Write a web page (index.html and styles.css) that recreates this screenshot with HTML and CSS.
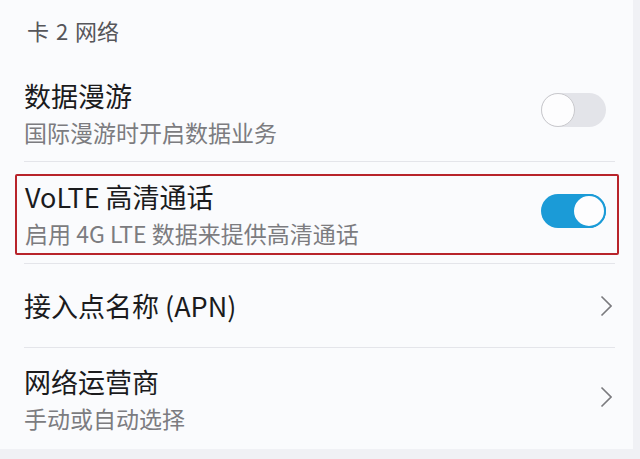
FILE: index.html
```html
<!DOCTYPE html>
<html lang="zh-CN">
<head>
	<meta charset="utf-8">
	<title>移动网络</title>
	<link rel="stylesheet" href="styles.css">
</head>
<body>
	<div class="page">
		<div class="section-title">卡 2 网络</div>
		<div class="list">
			<div class="item item-first">
				<div class="text">
					<div class="title">数据漫游</div>
					<div class="sub">国际漫游时开启数据业务</div>
				</div>
				<span class="switch"><span class="knob"></span></span>
			</div>
			<div class="divider"></div>
			<div class="item item-marked">
				<div class="text">
					<div class="title">VoLTE 高清通话</div>
					<div class="sub">启用 4G LTE 数据来提供高清通话</div>
				</div>
				<span class="switch on"><span class="knob"></span></span>
			</div>
			<div class="divider"></div>
			<div class="item item-single">
				<div class="text">
					<div class="title">接入点名称 (APN)</div>
				</div>
				<svg class="chevron" width="12" height="22" viewBox="0 0 12 22"><polyline points="1.5,1.5 11,11 1.5,20.5" fill="none" stroke="#7a7a7e" stroke-width="1.6"/></svg>
			</div>
			<div class="divider"></div>
			<div class="item item-last">
				<div class="text">
					<div class="title">网络运营商</div>
					<div class="sub">手动或自动选择</div>
				</div>
				<svg class="chevron" width="12" height="22" viewBox="0 0 12 22"><polyline points="1.5,1.5 11,11 1.5,20.5" fill="none" stroke="#7a7a7e" stroke-width="1.6"/></svg>
			</div>
		</div>
	</div>
</body>
</html>
```

FILE: styles.css
```css
body {
	margin: 0;
	background-color: #f0f1f5;
	font-family: "Noto Sans CJK SC", "Noto Sans", sans-serif;
}
.page {
	width: 633px;
	height: 449px;
	background-color: #fafbfd;
	overflow: hidden;
}
.section-title {
	padding: 12px 0 2px 27px;
	font-size: 22px;
	line-height: 36px;
	color: #56565a;
	word-spacing: 2px;
}
.list {
	padding: 0 18px 0 24px;
}
.item {
	display: flex;
	align-items: center;
	justify-content: space-between;
}
.item-first {
	padding: 28px 0 11px 0;
}
.item-marked {
	margin: 12px -4px 8px -9px;
	padding: 3px 2px 2px 8px;
	border: 2px solid #b8242b;
	border-radius: 2px;
}
.item-single {
	height: 83px;
}
.item-last {
	padding: 16px 0 12px 0;
}
.title {
	font-size: 27px;
	line-height: 36px;
	color: #1b1b1d;
}
.sub {
	font-size: 23px;
	line-height: 36px;
	color: #7c7c80;
}
.divider {
	height: 1px;
	background-color: #e4e5ea;
}
.switch {
	position: relative;
	width: 65px;
	height: 34px;
	border-radius: 17px;
	background-color: #e3e4e9;
	margin: 0 9px 8px 0;
}
.switch .knob {
	position: absolute;
	left: 0;
	top: 0;
	width: 32px;
	height: 32px;
	border-radius: 50%;
	background-color: #fdfdfe;
	border: 1px solid #c9c9cd;
}
.switch.on {
	background-color: #1b9bd7;
}
.switch.on .knob {
	left: auto;
	right: 0;
	width: 30px;
	height: 30px;
	border: 2px solid #1b9bd7;
}
.chevron {
	margin: 0 3px 0 0;
}
.item-last .chevron {
	margin-bottom: 6px;
}
```
